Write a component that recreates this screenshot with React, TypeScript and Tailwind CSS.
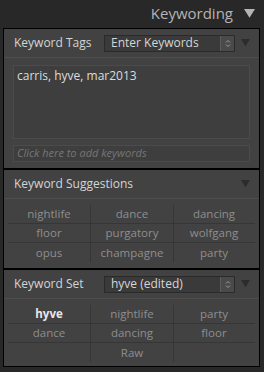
const suggestions = [
  ["nightlife", "dance", "dancing"],
  ["floor", "purgatory", "wolfgang"],
  ["opus", "champagne", "party"],
];

const keywordSet = [
  ["hyve", "nightlife", "party"],
  ["dance", "dancing", "floor"],
  ["", "Raw", ""],
];

function Triangle({ color = "#2c2c2c", size = 9 }: { color?: string; size?: number }) {
  return (
    <svg width={size} height={size * 0.8} viewBox="0 0 10 8">
      <path d="M0 0 L10 0 L5 8 Z" fill={color} />
    </svg>
  );
}

function Select({ label }: { label: string }) {
  return (
    <div className="flex h-[17px] w-[131px] items-center border border-[#2a2a2a] bg-[#3a3a3a]">
      <span className="flex-1 pl-[6px] text-[12px] leading-none text-[#d6d6d6]">{label}</span>
      <div className="flex h-full w-[14px] items-center justify-center border-l border-[#5c5c5c] bg-[#4a4a4a]">
        <svg width="6" height="9" viewBox="0 0 6 9">
          <path d="M1 3.5 L3 1.5 L5 3.5" stroke="#9a9a9a" strokeWidth="1" fill="none" />
          <path d="M1 5.5 L3 7.5 L5 5.5" stroke="#9a9a9a" strokeWidth="1" fill="none" />
        </svg>
      </div>
    </div>
  );
}

function Header({ title, select }: { title: string; select?: string }) {
  return (
    <div className="flex h-[29px] items-center border-b border-[#4e4e4e] pl-[10px] pr-[9px]">
      <span
        className={
          select
            ? "w-[90px] shrink-0 whitespace-nowrap text-[12px] text-[#d4d4d4]"
            : "shrink-0 whitespace-nowrap text-[12px] text-[#d4d4d4]"
        }
      >
        {title}
      </span>
      {select && <Select label={select} />}
      <span className="ml-auto">
        <Triangle />
      </span>
    </div>
  );
}

function KeywordGrid({ rows, bold, last }: { rows: string[][]; bold?: string; last?: boolean }) {
  return (
    <div className={last ? "px-[4px] pt-[6px] pb-[4px]" : "px-[4px] pt-[6px] pb-[6px]"}>
      {rows.map((row, i) => (
        <div
          key={i}
          className={i < rows.length - 1 ? "flex h-[19px] border-b border-[#363636]" : "flex h-[19px]"}
        >
          {row.map((word, j) => (
            <div
              key={j}
              className={
                j === 2
                  ? "flex w-[80px] items-center justify-center"
                  : "flex w-[83px] items-center justify-center border-r border-[#363636]"
              }
            >
              <span
                className={
                  word === bold
                    ? "text-[11.5px] font-bold text-[#e8e8e8]"
                    : "text-[11.5px] text-[#8e8e8e]"
                }
              >
                {word}
              </span>
            </div>
          ))}
        </div>
      ))}
    </div>
  );
}

export default function App() {
  return (
    <div
      className="h-[372px] w-[264px] overflow-hidden bg-[#282828]"
      style={{ fontFamily: '"Open Sans", "Noto Sans", sans-serif' }}
    >
      <div className="flex h-[28px] items-center justify-end gap-[11px] pr-[9px] pb-[1px]">
        <span className="text-[15px] text-[#b4b4b4]">Keywording</span>
        <Triangle color="#b4b4b4" size={11} />
      </div>

      <div className="ml-[3px] w-[257px] border border-black bg-[#424242]">
        <Header title="Keyword Tags" select="Enter Keywords" />
        <div className="px-[9px] pt-[7px] pb-[6px]">
          <div className="h-[74px] border border-[#4b4b4b] bg-[#3e3e3e] px-[3px] pt-[1px] text-[12px] text-[#dcdcdc]">
            carris, hyve, mar2013
          </div>
          <div className="mt-[6px] flex h-[17px] items-center border border-[#4b4b4b] bg-[#3e3e3e] px-[3px] text-[11px] italic text-[#767676]">
            Click here to add keywords
          </div>
        </div>

        <div className="border-t-2 border-black">
          <Header title="Keyword Suggestions" />
          <KeywordGrid rows={suggestions} />
        </div>

        <div className="border-t-2 border-black">
          <Header title="Keyword Set" select="hyve (edited)" />
          <KeywordGrid rows={keywordSet} bold="hyve" last />
        </div>
      </div>
    </div>
  );
}
